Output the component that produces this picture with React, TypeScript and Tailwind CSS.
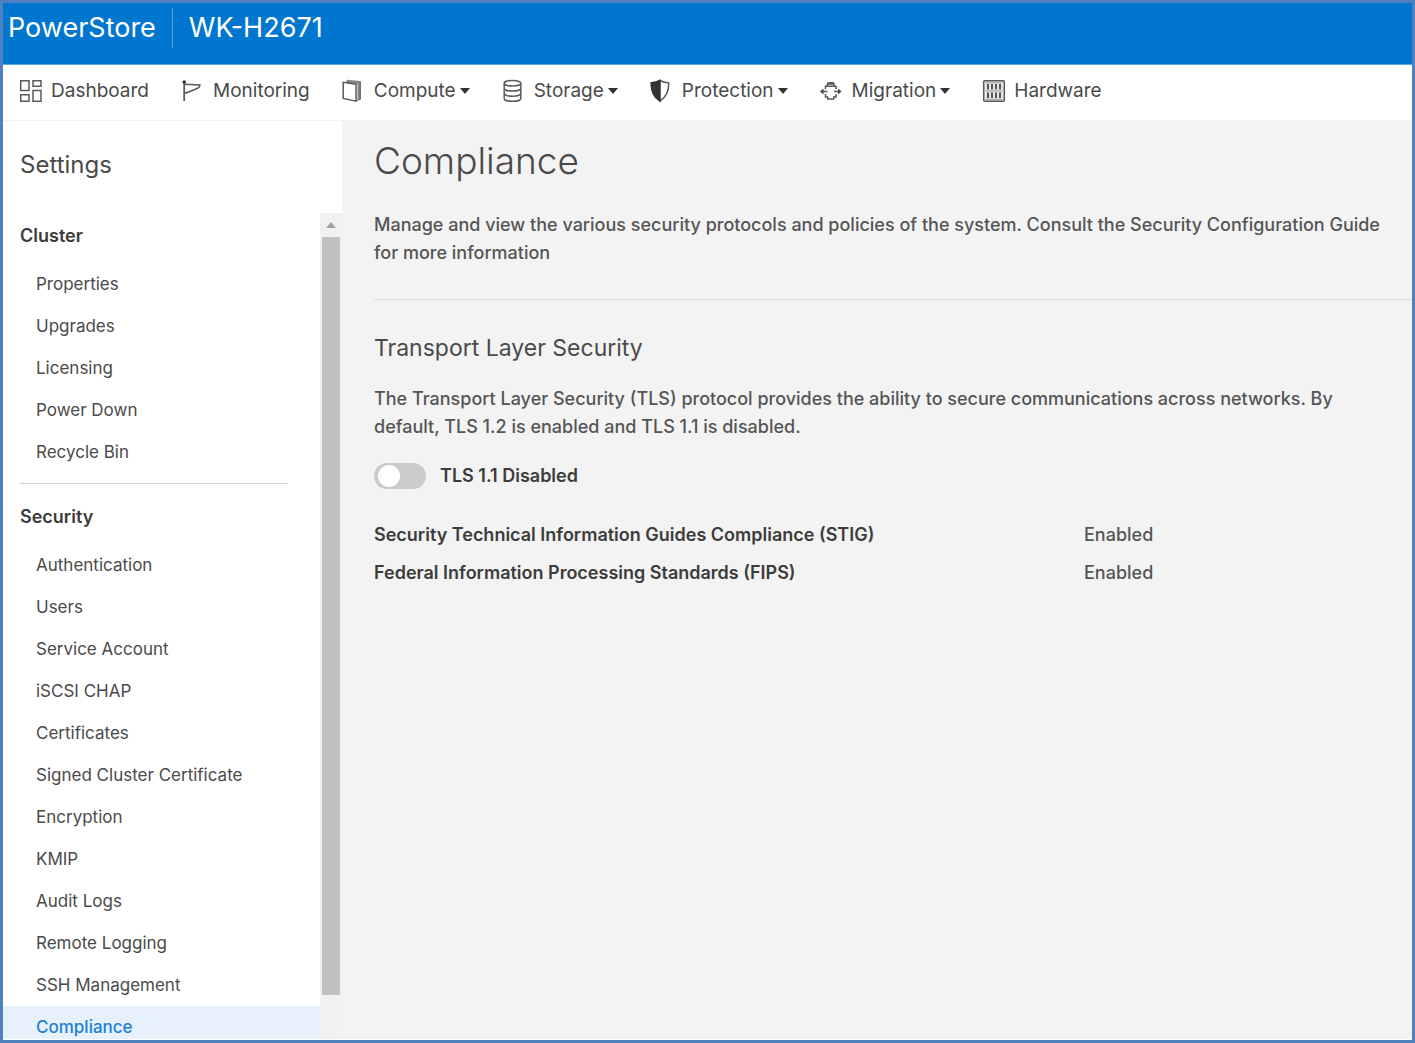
import { useState, type ReactNode } from "react";

const clusterItems = ["Properties", "Upgrades", "Licensing", "Power Down", "Recycle Bin"];
const securityItems = [
  "Authentication",
  "Users",
  "Service Account",
  "iSCSI CHAP",
  "Certificates",
  "Signed Cluster Certificate",
  "Encryption",
  "KMIP",
  "Audit Logs",
  "Remote Logging",
  "SSH Management",
  "Compliance",
];

function Icon({ children }: { children: ReactNode }) {
  return (
    <svg
      viewBox="0 0 24 24"
      className="size-6 shrink-0"
      fill="none"
      stroke="#5a5a5a"
      strokeWidth="1.5"
      aria-hidden="true"
    >
      {children}
    </svg>
  );
}

const DashboardIcon = () => (
  <Icon>
    <path d="M1.700 1.800h8.300v9.600H1.700zM14 1.800h8v5.400h-8zM1.700 15.800h8.300v6.400H1.700zM14 11.600h8v10.600h-8z" />
  </Icon>
);

const MonitoringIcon = () => (
  <Icon>
    <path d="M3.200 2v20" strokeWidth="1.800" />
    <circle cx="3.200" cy="3" r="1.800" fill="#333" stroke="none" />
    <path d="M3.200 5.200l15.800.7c-.3 2-1.400 3.300-3.500 3.800L7 13.200c-1.500.6-2.600.8-3.800.8" />
  </Icon>
);

const ComputeIcon = () => (
  <Icon>
    <path d="M4.500 2.200l12.500 1.200v17" strokeWidth="3" stroke="#858585" />
    <path d="M1.200 3.200l12.800 2v17L1.200 19.500z" fill="#fff" />
    <path d="M18.300 2.500v17.700L14 22" strokeWidth="1" />
  </Icon>
);

const StorageIcon = () => (
  <Icon>
    <ellipse cx="10.500" cy="4.200" rx="8.300" ry="2.800" />
    <path d="M2.200 4.200v15.200c0 1.600 3.700 2.900 8.300 2.900s8.300-1.300 8.300-2.900V4.200M2.200 9.200c0 1.600 3.700 2.900 8.300 2.900s8.300-1.300 8.300-2.900M2.200 14.300c0 1.600 3.700 2.900 8.300 2.900s8.300-1.300 8.300-2.900" />
  </Icon>
);

const ProtectionIcon = () => (
  <Icon>
    <path d="M10 1.500c2.800 1.500 5.500 2.300 8.700 2.300.3 8-2.200 14-8.700 18.300C3.500 17.800 1 11.800 1.300 3.800c3.200 0 5.900-.8 8.700-2.300z" />
    <path d="M10 1.500v20.600C3.500 17.800 1 11.800 1.300 3.800c3.200 0 5.900-.8 8.700-2.300z" fill="#333" stroke="#333" />
  </Icon>
);

const MigrationIcon = () => (
  <Icon>
    <path d="M5.500 10V7.300H16V10M5.500 15v3h2.200v2h6.100v-2H16v-3M7.300 7V5.500c0-1 .7-1.700 1.700-1.700h3.500c1 0 1.700.7 1.700 1.700V7M7.800 5h6" />
    <path d="M1.500 12.500h6M14 12.500h6" />
    <path d="M0 12.500l3.500-3v6zM21.500 12.500l-3.500-3v6z" fill="#444" stroke="none" />
  </Icon>
);

const HardwareIcon = () => (
  <Icon>
    <rect x="1.700" y="1.700" width="20.600" height="20.600" rx="1" fill="#e6e6e6" />
    <path d="M4 3.800h16M4 12h16M4 20.300h16" strokeWidth="1" stroke="#999" />
    <path d="M6 5v5.500M10 5v5.500M14 5v5.500M18 5v5.500M6 13.500V19M10 13.500V19M14 13.500V19M18 13.500V19" strokeWidth="2" stroke="#555" />
  </Icon>
);

const navItems = [
  { label: "Dashboard", icon: <DashboardIcon />, menu: false },
  { label: "Monitoring", icon: <MonitoringIcon />, menu: false },
  { label: "Compute", icon: <ComputeIcon />, menu: true },
  { label: "Storage", icon: <StorageIcon />, menu: true },
  { label: "Protection", icon: <ProtectionIcon />, menu: true },
  { label: "Migration", icon: <MigrationIcon />, menu: true },
  { label: "Hardware", icon: <HardwareIcon />, menu: false },
];

function MenuGroup({ title, items }: { title: string; items: string[] }) {
  return (
    <section>
      <h3 className="px-[17px] pb-[15px] text-lg leading-6 font-semibold text-[#3c3c3c]">{title}</h3>
      <ul>
        {items.map((item) => (
          <li key={item}>
            <a
              href="#"
              aria-current={item === "Compliance" ? "page" : undefined}
              className="block px-[33px] text-[17px] leading-[42px] aria-[current=page]:bg-[#e6f1fb] aria-[current=page]:font-medium aria-[current=page]:text-[#1f7fd6]"
            >
              {item}
            </a>
          </li>
        ))}
      </ul>
    </section>
  );
}

export default function App() {
  const [tls, setTls] = useState(false);

  return (
    <div className="flex h-screen flex-col overflow-hidden border-3 border-[#4f81bd] bg-white pb-px font-['Inter',sans-serif] text-[#4a4a4a]">
      <header className="flex h-[62px] shrink-0 items-start border-b border-[#5aa9e6] bg-[#0076ce] px-[5px] pt-[5px] text-[27px] leading-10 text-white">
        <span>PowerStore</span>
        <span className="mx-4 h-10 w-px bg-[#5aa6e0]" />
        <span>WK-H2671</span>
      </header>

      <nav className="flex h-14 shrink-0 items-center gap-8 border-b border-[#f3f3f3] px-4 pb-1 text-[19px] leading-6">
        {navItems.map(({ label, icon, menu }) =>
          menu ? (
            <button key={label} type="button" className="flex items-center">
              {icon}
              <span className="ml-2">{label}</span>
              <svg viewBox="0 0 10 6" className="ml-1 h-1.5 w-2.5" fill="#333" aria-hidden="true">
                <path d="M0 0h10L5 6z" />
              </svg>
            </button>
          ) : (
            <a key={label} href="#" className="flex items-center">
              {icon}
              <span className="ml-2">{label}</span>
            </a>
          ),
        )}
      </nav>

      <div className="flex min-h-0 flex-1">
        <aside className="flex w-[339px] shrink-0 flex-col">
          <h2 className="px-[17px] pt-7 pb-8 text-2xl leading-8">Settings</h2>
          <div className="flex min-h-0 flex-1">
            <div className="min-w-0 flex-1 overflow-y-auto pt-[11px] [scrollbar-width:none]">
              <MenuGroup title="Cluster" items={clusterItems} />
              <hr className="mt-[10px] mr-8 mb-[21px] ml-[17px] border-[#d4d4d4]" />
              <MenuGroup title="Security" items={securityItems} />
            </div>
            <div className="flex w-[22px] flex-col items-center bg-[#f1f1f1]">
              <button type="button" aria-label="Scroll up" className="flex h-6 shrink-0 items-center">
                <svg viewBox="0 0 10 6" className="h-1.5 w-2.5" fill="#a3a3a3" aria-hidden="true">
                  <path d="M0 6h10L5 0z" />
                </svg>
              </button>
              <div className="mb-11 w-[18px] flex-1 bg-[#c1c1c1]" />
            </div>
          </div>
        </aside>

        <main className="min-w-0 flex-1 bg-[#f3f3f3] pl-8">
          <h1 className="pt-4 text-[37px] leading-[48px] font-light">Compliance</h1>
          <p className="mt-[26px] pr-3 text-lg leading-7 font-medium text-[#555]">
            Manage and view the various security protocols and policies of the system. Consult the Security
            Configuration Guide for more information
          </p>
          <hr className="mt-8 border-[#dcdcdc]" />
          <h2 className="mt-8 text-[23px] leading-8">Transport Layer Security</h2>
          <p className="mt-[21px] pr-8 text-lg leading-7 font-medium text-[#555]">
            The Transport Layer Security (TLS) protocol provides the ability to secure communications across
            networks. By default, TLS 1.2 is enabled and TLS 1.1 is disabled.
          </p>
          <label className="mt-[21px] flex w-fit items-center text-lg leading-7 font-semibold text-[#3c3c3c]">
            <input
              type="checkbox"
              role="switch"
              checked={tls}
              onChange={(e) => setTls(e.target.checked)}
              className="mr-[14px] h-[26px] w-[52px] appearance-none rounded-full bg-[#cbcbcb] px-1 py-0.5 before:block before:size-[22px] before:rounded-full before:bg-white checked:bg-[#0076ce] checked:before:ml-auto"
            />
            TLS 1.1 Disabled
          </label>
          <dl className="mt-[26px] grid grid-cols-[710px_1fr] text-lg leading-[38px]">
            <dt className="font-semibold text-[#3c3c3c]">Security Technical Information Guides Compliance (STIG)</dt>
            <dd className="font-medium text-[#555]">Enabled</dd>
            <dt className="font-semibold text-[#3c3c3c]">Federal Information Processing Standards (FIPS)</dt>
            <dd className="font-medium text-[#555]">Enabled</dd>
          </dl>
        </main>
      </div>
    </div>
  );
}
